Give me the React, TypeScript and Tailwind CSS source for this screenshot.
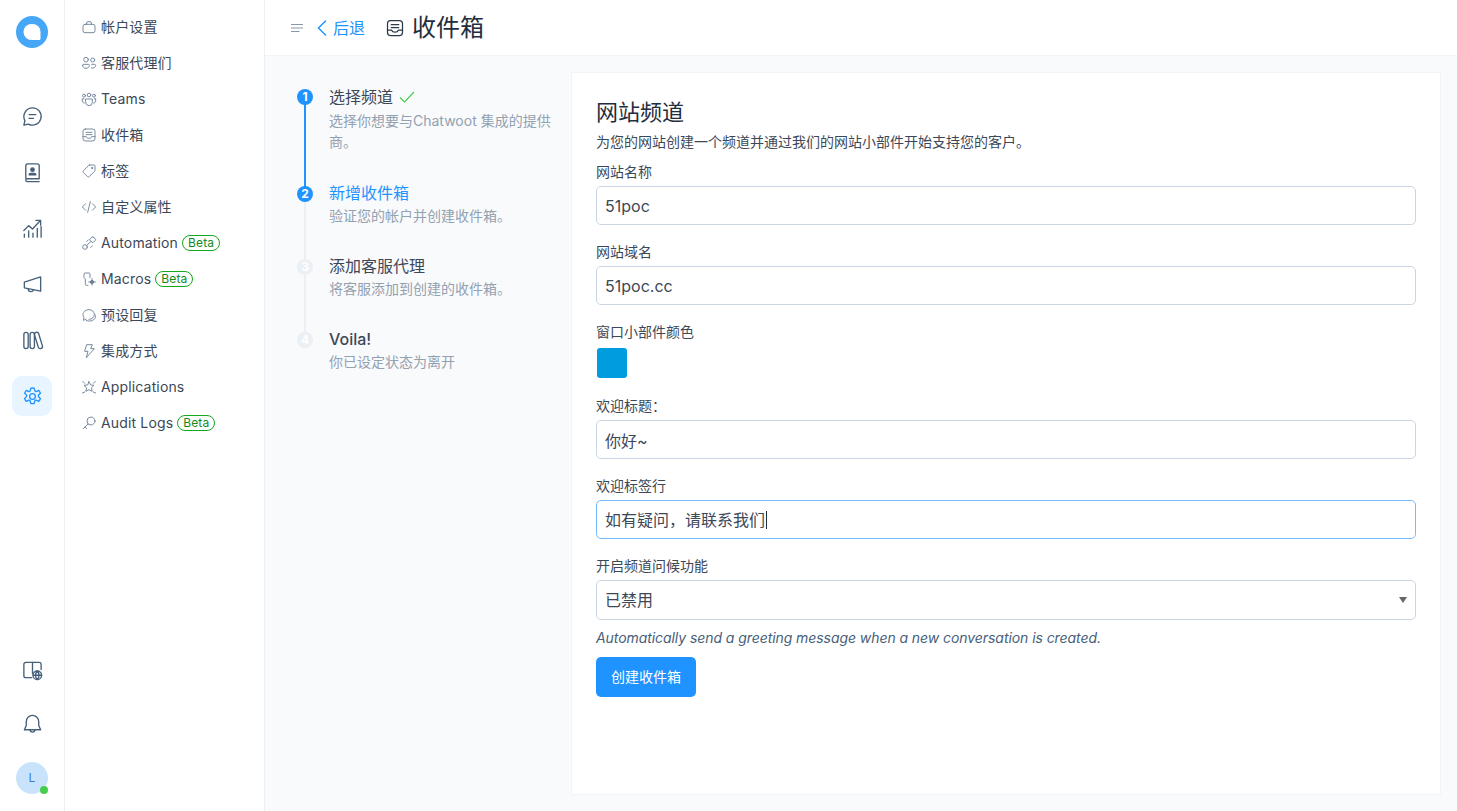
import type { ReactNode } from "react";

const fontStack = "font-['Inter','Noto_Sans_CJK_SC',sans-serif]";

function Svg({
  size,
  children,
  className,
  weight = 1.5,
}: {
  size: number;
  children: ReactNode;
  className?: string;
  weight?: number;
}) {
  return (
    <svg
      width={size}
      height={size}
      viewBox="0 0 24 24"
      fill="none"
      stroke="currentColor"
      strokeWidth={weight}
      strokeLinecap="round"
      strokeLinejoin="round"
      className={className}
    >
      {children}
    </svg>
  );
}

const InboxGlyph = (
  <>
    <rect x="3" y="3" width="18" height="18" rx="3.5" />
    <path d="M3 14.500h5c.5 1.700 2 2.500 4 2.500s3.500-.8 4-2.500h5" />
    <path d="M7.500 8h9M7.500 11.500h9" />
  </>
);

const menuIcons: Record<string, ReactNode> = {
  briefcase: (
    <>
      <rect x="3" y="8" width="18" height="12.500" rx="3" />
      <path d="M8.500 8V6a2 2 0 0 1 2-2h3a2 2 0 0 1 2 2v2" />
    </>
  ),
  people: (
    <>
      <circle cx="7.500" cy="7" r="3.500" />
      <circle cx="17.500" cy="7.500" r="3" />
      <path d="M2.500 15.500c0-1 .8-1.500 1.500-1.500h7c.9 0 1.500.6 1.500 1.500 0 2.700-2.200 4.500-5 4.500s-5-1.800-5-4.500z" />
      <path d="M15.500 19.500c3.500.5 6.500-1 6.500-3.700 0-1-.7-1.800-1.700-1.800H16" />
    </>
  ),
  team: (
    <>
      <circle cx="12" cy="6" r="2.700" />
      <circle cx="4.500" cy="7" r="2.200" />
      <circle cx="19.500" cy="7" r="2.200" />
      <path d="M7 12h10v5a5 5 0 0 1-10 0z" />
      <path d="M4 11.500H2v3.500c0 1.800 1.200 3 3 3M20 11.500h2v3.500c0 1.800-1.200 3-3 3" />
    </>
  ),
  inbox: InboxGlyph,
  tag: (
    <>
      <path d="M13 3h6.500A1.500 1.500 0 0 1 21 4.500V11a2 2 0 0 1-.6 1.400l-8 7.900a2 2 0 0 1-2.800 0l-5.900-5.900a2 2 0 0 1 0-2.800l7.900-8A2 2 0 0 1 13 3z" />
      <circle cx="16.500" cy="7.500" r="1" />
    </>
  ),
  code: <path d="M7 7 2 12l5 5M17 7l5 5-5 5M14 4l-4 16" />,
  automation: (
    <>
      <circle cx="6" cy="18" r="3.500" />
      <rect x="14" y="3.500" width="7" height="7" rx="1.500" transform="rotate(45 17.500 7)" />
      <path d="M8.500 15.500 14.500 10" />
      <path d="M11 7.500 8.500 9.500M14.500 18.500l2.500-2" />
    </>
  ),
  macros: (
    <>
      <path d="M10.500 21.500H8A1.500 1.500 0 0 1 6.500 20v-8L4.500 10V4.500A1.500 1.500 0 0 1 6 3h6a1.500 1.500 0 0 1 1.500 1.500V10" />
      <circle cx="16.500" cy="16.500" r="2.500" fill="currentColor" />
      <path d="M16.500 11.500v2M16.500 19.500v2M11.500 16.500h2M19.500 16.500h2" />
    </>
  ),
  canned: (
    <>
      <path d="M12 18.500c4.500 0 8-3 8-7.200S16.500 4 12 4 3 7 3 11.300c0 1.700.6 3.200 1.500 4.500L3.500 20l4-1.500" />
      <path d="M8 20.500c5 1.500 10.500.5 13-3.500 1-1.700 1-3.500.2-5.500" />
    </>
  ),
  bolt: <path d="M9 2.500h8l-2.500 6H20L8 22l2.500-9.500H6z" />,
  apps: (
    <>
      <path d="M12 4l2.300 4.800 5.200.7-3.800 3.700 1 5.300L12 16l-4.700 2.500 1-5.300L4.500 9.500l5.200-.7z" />
      <path d="M2.500 3.500 5.500 6.500M21.500 3.500l-3 3M2 21l3.500-1.500M22 21l-3.500-1.500" />
    </>
  ),
  key: (
    <>
      <circle cx="15" cy="9" r="6" />
      <path d="M10.500 13.500 3.500 20.500M6 18l2.500 2.500" />
    </>
  ),
};

const menu = [
  { label: "帐户设置", icon: "briefcase" },
  { label: "客服代理们", icon: "people" },
  { label: "Teams", icon: "team" },
  { label: "收件箱", icon: "inbox" },
  { label: "标签", icon: "tag" },
  { label: "自定义属性", icon: "code" },
  { label: "Automation", icon: "automation", beta: true },
  { label: "Macros", icon: "macros", beta: true },
  { label: "预设回复", icon: "canned" },
  { label: "集成方式", icon: "bolt" },
  { label: "Applications", icon: "apps" },
  { label: "Audit Logs", icon: "key", beta: true },
];

const railTop: { glyph: ReactNode; active?: boolean }[] = [
  {
    glyph: (
      <>
        <path d="M12 3a9 9 0 1 1-4.300 16.900L3 21l1.100-4.700A9 9 0 0 1 12 3z" />
        <path d="M8.500 10h7M8.500 14h4.500" />
      </>
    ),
  },
  {
    glyph: (
      <>
        <path d="M5 18.500V5a2 2 0 0 1 2-2h10a2 2 0 0 1 2 2v13.500H6.500A1.500 1.500 0 0 0 5 20a1.500 1.500 0 0 0 1.500 1.500H19" />
        <circle cx="12" cy="9" r="1.800" fill="currentColor" />
        <path d="M8.500 14.500c0-1.200 1-1.500 1.500-1.500h4c.7 0 1.500.4 1.500 1.500z" fill="currentColor" />
      </>
    ),
  },
  {
    glyph: (
      <>
        <path d="M3 14l5-5 4 3.500L20 4M15.500 3.500H20.500V8.500" />
        <path d="M3.500 18v3M8 14.500v6.500M12.500 17v4M17 12v9M21 10v11" />
      </>
    ),
  },
  {
    glyph: (
      <>
        <path d="M20.500 4v15L3.500 15.500v-6z" />
        <path d="M7.500 16.500c0 2 1.200 3 2.700 3s2.600-1 2.800-2" />
      </>
    ),
  },
  {
    glyph: (
      <>
        <rect x="3" y="3.500" width="4.500" height="17" rx="2.200" />
        <rect x="9.500" y="3.500" width="4.500" height="17" rx="2.200" />
        <rect x="16" y="3.200" width="4.500" height="17.600" rx="2.200" transform="rotate(-17 18 12)" />
      </>
    ),
  },
  {
    active: true,
    glyph: (
      <>
        <circle cx="12" cy="12" r="3" />
        <path d="M10.300 3.300a9 9 0 0 1 3.400 0l.6 2.300a1.500 1.500 0 0 0 2.100 1l2.100-1a9 9 0 0 1 1.700 3l-1.700 1.600a1.500 1.500 0 0 0 0 2.200l1.700 1.600a9 9 0 0 1-1.700 3l-2.100-1a1.500 1.500 0 0 0-2.100 1l-.6 2.300a9 9 0 0 1-3.400 0l-.6-2.300a1.500 1.500 0 0 0-2.100-1l-2.100 1a9 9 0 0 1-1.700-3l1.700-1.600a1.500 1.500 0 0 0 0-2.200L3.900 8.600a9 9 0 0 1 1.700-3l2.100 1a1.500 1.500 0 0 0 2.100-1z" />
      </>
    ),
  },
];

const steps = [
  { n: 1, title: "选择频道", desc: "选择你想要与Chatwoot 集成的提供商。", state: "done" },
  { n: 2, title: "新增收件箱", desc: "验证您的帐户并创建收件箱。", state: "active" },
  { n: 3, title: "添加客服代理", desc: "将客服添加到创建的收件箱。", state: "todo" },
  { n: 4, title: "Voila!", desc: "你已设定状态为离开", state: "todo" },
];

function RailItem({ glyph, active }: { glyph: ReactNode; active?: boolean }) {
  return (
    <div
      className={`flex h-10 w-10 items-center justify-center rounded-[10px] ${
        active ? "bg-[#e8f4ff] text-[#1f93ff]" : "text-[#47607a]"
      }`}
    >
      <Svg size={23} weight={1.4}>
        {glyph}
      </Svg>
    </div>
  );
}

function Beta() {
  return (
    <span className="ml-1 flex h-4 items-center rounded-full border border-[#14a81e] px-[5px] text-xs leading-none text-[#148a1e]">
      Beta
    </span>
  );
}

function Field({ label, value, className }: { label: string; value: string; className?: string }) {
  return (
    <label className={`block ${className ?? ""}`}>
      <span className="block h-[21px] text-sm leading-[21px] text-[#3c4858]">{label}</span>
      <input
        readOnly
        value={value}
        className="mt-[4px] block h-[39px] w-full rounded-[5px] border border-[#c8d6e4] bg-white px-2 text-base text-[#3c4858] outline-none"
      />
    </label>
  );
}

export default function App() {
  return (
    <div className={`flex h-[811px] w-[1457px] overflow-hidden bg-white ${fontStack}`}>
      {/* icon rail */}
      <aside className="flex w-[65px] shrink-0 flex-col items-center border-r border-[#ebf0f5] pt-4 pb-[17px]">
        <svg width="32" height="32" viewBox="0 0 32 32">
          <circle cx="16" cy="16" r="16" fill="#47a7f6" />
          <path d="M15.500 8h1a8 8 0 0 1 8 8v6.500a1.500 1.500 0 0 1-1.500 1.500h-7.500a8 8 0 0 1 0-16z" fill="#fff" />
        </svg>
        <nav className="mt-[48px] flex flex-col gap-4">
          {railTop.map((item, i) => (
            <RailItem key={i} {...item} />
          ))}
        </nav>
        <div className="mt-auto flex flex-col items-center">
          <RailItem
            glyph={
              <>
                <path d="M11 19.500H5A2 2 0 0 1 3 17.500V5.500a2 2 0 0 1 2-2h14a2 2 0 0 1 2 2V11" />
                <path d="M12 3.500V15" />
                <circle cx="17" cy="17" r="4.500" />
                <path d="M12.500 17h9M17 12.500c-2.500 3-2.500 6 0 9M17 12.500c2.500 3 2.500 6 0 9" />
              </>
            }
          />
          <div className="mt-[14px]">
            <RailItem
              glyph={
                <>
                  <path d="M12 2.500a6.500 6.500 0 0 0-6.500 6.500v4L3.500 17.500h17L18.500 13V9A6.500 6.500 0 0 0 12 2.500z" />
                  <path d="M9.500 17.500a2.500 2.500 0 0 0 5 0" />
                </>
              }
            />
          </div>
          <div className="relative mt-[18px] flex h-8 w-8 items-center justify-center rounded-full bg-[#c9e3fd] text-xs text-[#3f7fd0]">
            L
            <span className="absolute right-0 bottom-0 h-2 w-2 rounded-full bg-[#44ce4b]" />
          </div>
        </div>
      </aside>

      {/* settings menu */}
      <aside className="w-[200px] shrink-0 border-r border-[#ebf0f5] px-[18px] pt-[9px]">
        {menu.map((item) => (
          <div key={item.label} className="flex h-9 items-center text-sm tracking-[0.15px] text-[#3c4858]">
            <Svg size={16} weight={1.35} className="mr-[4px] -ml-[2px] shrink-0 text-[#6b7f96]">
              {menuIcons[item.icon]}
            </Svg>
            <span>{item.label}</span>
            {item.beta && <Beta />}
          </div>
        ))}
      </aside>

      <div className="flex min-w-0 flex-1 flex-col">
        {/* header */}
        <header className="flex h-[56px] shrink-0 items-center border-b border-[#f2f5f8] pl-[25px]">
          <svg width="14" height="14" viewBox="0 0 14 14" className="text-[#8796a8]" stroke="currentColor" strokeWidth="1.200">
            <path d="M1 3.500h12M1 7h12M1 10.500h8.500" />
          </svg>
          <svg width="10" height="16" viewBox="0 0 10 16" fill="none" stroke="#1f93ff" strokeWidth="1.500" strokeLinecap="round" strokeLinejoin="round" className="ml-[13px]">
            <path d="M8.500 1 1.500 8l7 7" />
          </svg>
          <span className="ml-[6px] text-base text-[#1f93ff]">后退</span>
          <Svg size={20} className="ml-[20px] text-[#2d3a4a]">
            {InboxGlyph}
          </Svg>
          <h1 className="ml-[7px] text-2xl font-normal text-[#1f2d3d]">收件箱</h1>
        </header>

        <main className="flex min-h-0 flex-1 bg-[#f9fafc] pr-4">
          {/* wizard steps */}
          <section className="w-[306px] shrink-0 pt-[29px] pl-[32px] pr-[17px]">
            {steps.map((s, i) => {
              const current = s.state === "active";
              const lit = s.state !== "todo";
              const bar = s.state === "done" ? "bg-[#1f93ff]" : "bg-[#ebf0f5]";
              return (
                <div key={s.n} className={`relative pl-8 ${i === 0 ? "pb-[29px]" : "pb-[28px]"}`}>
                  {i < steps.length - 1 && (
                    <span className={`absolute top-[8px] bottom-[-14px] left-[7px] w-[2px] ${bar}`} />
                  )}
                  <span
                    className={`absolute left-0 flex h-4 w-4 items-center justify-center rounded-full text-xs font-bold text-white ${
                      i === 0 ? "top-[4px]" : "top-[5px]"
                    } ${lit ? "bg-[#1f93ff]" : "bg-[#ebf0f5]"}`}
                  >
                    {s.n}
                  </span>
                  <div
                    className={`flex h-6 items-center text-base ${s.n === 4 ? "font-medium" : "font-normal"} ${
                      current ? "text-[#1f93ff]" : "text-[#3c4858]"
                    } ${s.n === 1 ? "mb-px" : ""}`}
                  >
                    {s.title}
                    {s.n === 1 && (
                      <svg width="16" height="16" viewBox="0 0 16 16" fill="none" stroke="#44ce4b" strokeWidth="1.200" className="ml-[6px]">
                        <path d="M1 8.500 5.500 13 15 3" />
                      </svg>
                    )}
                  </div>
                  <p className="text-sm leading-[21px] text-[#93a1b0]">{s.desc}</p>
                </div>
              );
            })}
          </section>

          {/* form card */}
          <section className="mt-[16px] mb-[16px] flex-1 border border-[#f2f5f8] bg-white px-6 pt-[23px]">
            <h2 className="h-[33px] text-[22px] leading-[33px] font-normal text-[#1f2d3d]">网站频道</h2>
            <p className="mt-[2px] h-[21px] text-sm leading-[21px] text-[#3c4858]">
              为您的网站创建一个频道并通过我们的网站小部件开始支持您的客户。
            </p>
            <Field label="网站名称" value="51poc" className="mt-[9px]" />
            <Field label="网站域名" value="51poc.cc" className="mt-[16px]" />

            <div className="mt-[16px] h-[21px] text-sm leading-[21px] text-[#3c4858]">窗口小部件颜色</div>
            <div className="mt-[5px] flex h-[32px] w-[32px] items-center justify-center rounded-[4px] bg-white">
              <span className="h-[30px] w-[30px] rounded-[3px] bg-[#009ce0]" />
            </div>

            <Field label="欢迎标题：" value="你好~" className="mt-[16px]" />

            <div className="mt-[16px]">
              <span className="block h-[21px] text-sm leading-[21px] text-[#3c4858]">欢迎标签行</span>
              <div className="mt-[4px] flex h-[39px] items-center rounded-[5px] border border-[#74bcff] bg-white px-2 text-base text-[#3c4858]">
                如有疑问，请联系我们
                <span className="ml-[1px] h-[18px] w-[1px] bg-[#1f2d3d]" />
              </div>
            </div>

            <div className="mt-[16px]">
              <span className="block h-[21px] text-sm leading-[21px] text-[#3c4858]">开启频道问候功能</span>
              <div className="relative mt-[4px] flex h-[40px] items-center rounded-[5px] border border-[#c8d6e4] bg-white px-2 text-base text-[#3c4858]">
                已禁用
                <span className="absolute top-[16px] right-[8px] h-0 w-0 border-x-[4px] border-t-[6px] border-x-transparent border-t-[#666]" />
              </div>
            </div>

            <p className="mt-[7px] h-[21px] text-sm leading-[21px] tracking-[-0.07px] text-[#47607a] italic">
              Automatically send a greeting message when a new conversation is created.
            </p>
            <button className="mt-[9px] h-10 w-[100px] rounded-[5px] bg-[#1f93ff] text-sm text-white">创建收件箱</button>
          </section>
        </main>
      </div>
    </div>
  );
}
